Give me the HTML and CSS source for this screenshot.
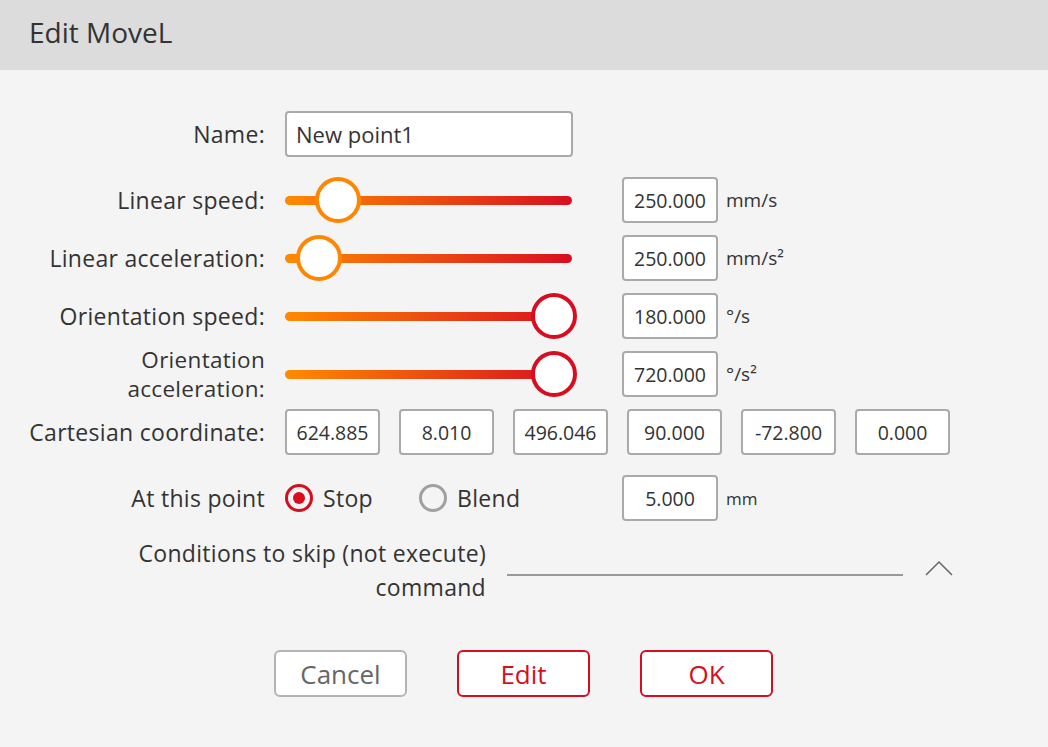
FILE: index.html
```html
<!DOCTYPE html>
<html lang="en">
<head>
    <meta charset="UTF-8">
    <title>Edit MoveL</title>
    <link rel="stylesheet" href="styles.css">
</head>
<body>
<div class="dialog">
    <div class="dialog__title">Edit MoveL</div>
    <div class="dialog__body">
        <div class="row row--name">
            <label class="row__label">Name:</label>
            <input class="field field--name" type="text" value="New point1">
        </div>

        <div class="row row--first">
            <label class="row__label">Linear speed:</label>
            <div class="slider">
                <div class="slider__track"></div>
                <div class="slider__thumb" style="left: 53px;"></div>
            </div>
            <input class="field field--value" type="text" value="250.000">
            <span class="unit">mm/s</span>
        </div>

        <div class="row">
            <label class="row__label">Linear acceleration:</label>
            <div class="slider">
                <div class="slider__track"></div>
                <div class="slider__thumb" style="left: 34px;"></div>
            </div>
            <input class="field field--value" type="text" value="250.000">
            <span class="unit">mm/s²</span>
        </div>

        <div class="row">
            <label class="row__label">Orientation speed:</label>
            <div class="slider">
                <div class="slider__track"></div>
                <div class="slider__thumb slider__thumb--max" style="left: 269px;"></div>
            </div>
            <input class="field field--value" type="text" value="180.000">
            <span class="unit">°/s</span>
        </div>

        <div class="row">
            <label class="row__label row__label--two">Orientation<br>acceleration:</label>
            <div class="slider">
                <div class="slider__track"></div>
                <div class="slider__thumb slider__thumb--max" style="left: 269px;"></div>
            </div>
            <input class="field field--value" type="text" value="720.000">
            <span class="unit">°/s²</span>
        </div>

        <div class="row">
            <label class="row__label">Cartesian coordinate:</label>
            <div class="coords">
                <input class="field field--coord" type="text" value="624.885">
                <input class="field field--coord" type="text" value="8.010">
                <input class="field field--coord" type="text" value="496.046">
                <input class="field field--coord" type="text" value="90.000">
                <input class="field field--coord" type="text" value="-72.800">
                <input class="field field--coord" type="text" value="0.000">
            </div>
        </div>

        <div class="row row--point">
            <label class="row__label">At this point</label>
            <div class="radios">
                <div class="radio-item radio-item--stop">
                    <span class="radio radio--on"></span>
                    <span>Stop</span>
                </div>
                <div class="radio-item">
                    <span class="radio"></span>
                    <span>Blend</span>
                </div>
            </div>
            <input class="field field--value" type="text" value="5.000">
            <span class="unit unit--small">mm</span>
        </div>

        <div class="skip">
            <div class="skip__label">Conditions to skip (not execute)<br>command</div>
            <div class="skip__line"></div>
            <svg class="skip__chevron" width="28" height="16" viewBox="0 0 28 16">
                <polyline points="1,15 14,2 27,15" fill="none" stroke="#666" stroke-width="1.5"/>
            </svg>
        </div>

        <div class="buttons">
            <button class="btn btn--cancel">Cancel</button>
            <button class="btn btn--red">Edit</button>
            <button class="btn btn--red">OK</button>
        </div>
    </div>
</div>
</body>
</html>
```
FILE: styles.css
```css
html, body {
    margin: 0;
    padding: 0;
    background: #f4f4f4;
}

.dialog {
    width: 1048px;
    height: 747px;
    font-family: "Open Sans", Lato, sans-serif;
    color: #333;
    overflow: hidden;
}

.dialog__title {
    height: 70px;
    background: #dcdcdc;
    padding-left: 29px;
    font-size: 28px;
    line-height: 64px;
    color: #333;
}

.dialog__body {
    padding-top: 41px;
}

.row {
    display: flex;
    align-items: center;
    height: 46px;
    margin-bottom: 12px;
}
.row--name {
    margin-bottom: 20px;
}
.row--point {
    margin-top: 20px;
}

.row__label {
    width: 285px;
    padding-right: 20px;
    box-sizing: border-box;
    text-align: right;
    font-size: 23px;
    letter-spacing: 0.3px;
    flex-shrink: 0;
}
.row__label--two {
    font-size: 22.5px;
    line-height: 29px;
}

.field {
    box-sizing: border-box;
    height: 46px;
    border: 2px solid #aaa;
    border-radius: 4px;
    background: #fff;
    font-family: "Open Sans", Lato, sans-serif;
    font-size: 19.5px;
    color: #333;
    outline: none;
}
.field--name {
    width: 288px;
    padding: 0 9px;
    font-size: 22px;
}
.field--value {
    width: 96px;
    text-align: center;
    padding: 0;
}
.field--coord {
    width: 95px;
    text-align: center;
    padding: 0;
}

.unit {
    margin-left: 8px;
    font-size: 19px;
}
.unit--small {
    font-size: 17px;
}

.slider {
    position: relative;
    width: 287px;
    height: 46px;
    margin-right: 50px;
}
.slider__track {
    position: absolute;
    left: 0;
    right: 0;
    top: 19px;
    height: 9px;
    border-radius: 5px;
    background: linear-gradient(to right, #ff8a00, #d80e20);
}
.slider__thumb {
    position: absolute;
    top: 0;
    box-sizing: border-box;
    width: 46px;
    height: 46px;
    margin-left: -23px;
    border-radius: 50%;
    border: 4px solid #ff8600;
    background: #fff;
}
.slider__thumb--max {
    border-color: #d80e20;
}

.coords {
    display: flex;
    gap: 19px;
}

.radios {
    display: flex;
    align-items: center;
    width: 337px;
    font-size: 23px;
    letter-spacing: 0.3px;
}
.radio-item {
    display: flex;
    align-items: center;
}
.radio-item--stop {
    width: 134px;
}
.radio {
    box-sizing: border-box;
    width: 28px;
    height: 28px;
    border-radius: 50%;
    border: 3px solid #a0a0a0;
    margin-right: 10px;
    position: relative;
}
.radio--on {
    border-color: #d80e20;
}
.radio--on::after {
    content: "";
    position: absolute;
    left: 5px;
    top: 5px;
    width: 12px;
    height: 12px;
    border-radius: 50%;
    background: #d80e20;
}

.skip {
    display: flex;
    align-items: center;
    margin-top: 15px;
}
.skip__label {
    width: 486px;
    text-align: right;
    font-size: 23px;
    letter-spacing: 0.3px;
    line-height: 34px;
    flex-shrink: 0;
}
.skip__line {
    margin-left: 21px;
    width: 396px;
    height: 2px;
    background: #999;
    margin-top: 10px;
}
.skip__chevron {
    margin-left: 22px;
    margin-top: -4px;
}

.buttons {
    display: flex;
    margin-top: 46px;
    padding-left: 274px;
    gap: 50px;
}
.btn {
    box-sizing: border-box;
    width: 133px;
    height: 47px;
    border-radius: 6px;
    background: #fff;
    font-family: "Open Sans", Lato, sans-serif;
    font-size: 26px;
    padding: 0;
}
.btn--cancel {
    border: 2px solid #b4b4b4;
    color: #666;
}
.btn--red {
    border: 2px solid #d80e20;
    color: #d80e20;
}
```
